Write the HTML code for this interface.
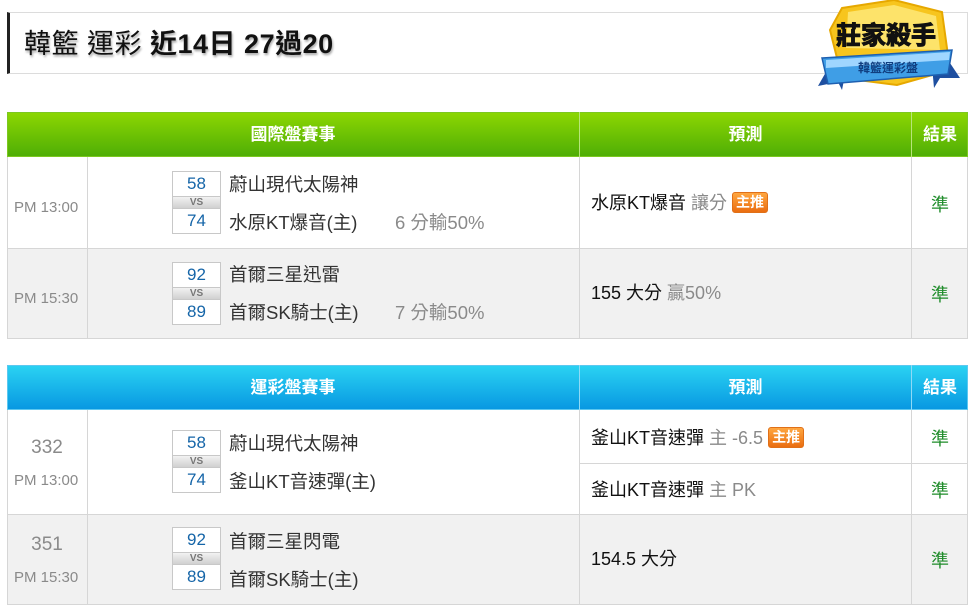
<!DOCTYPE html>
<html><head><meta charset="utf-8"><style>
*{margin:0;padding:0;box-sizing:border-box}
body{width:975px;height:613px;background:#fff;position:relative;overflow:hidden;font-family:"Liberation Sans","Noto Sans CJK TC",sans-serif}
.a{position:absolute}
.t{font-size:18.5px;line-height:20px;white-space:nowrap}
.p{font-size:18px;line-height:20px;white-space:nowrap}
.hd{color:#fff;font-weight:bold;font-size:17px;text-align:center;line-height:45px;position:absolute}
.sb{position:absolute;left:172px;width:49px;height:63px;border:1px solid #c8c8c8;background:#fff}
.sb .n{height:24px;text-align:center;color:#1565a8;font-size:17px;line-height:24px}
.sb .v{height:13px;background:linear-gradient(#f2f2f2,#d0d0d0);border-top:1px solid #c8c8c8;border-bottom:1px solid #c8c8c8;text-align:center;font-size:10px;line-height:11px;font-weight:bold;color:#777}
.g{color:#8a8a8a}
.zt{display:inline-block;background:linear-gradient(#ffa640,#ea6d10);color:#fff;border:1px solid #e07018;border-radius:3px;font-size:14px;line-height:18px;height:21px;padding:0 3px;vertical-align:2px;font-weight:bold}
.z{color:#1f8c2a;font-size:18px;text-align:center}
.tm{font-size:15px}
</style></head><body>
<div class="a" style="left:7px;top:12px;width:961px;height:62px;border:1px solid #dcdcdc;border-left:3px solid #222"></div>
<div class="a" style="left:24px;top:27px;font-size:27px;line-height:34px;color:#111;text-shadow:1px 2px 2px #aaa;white-space:nowrap;letter-spacing:0.5px">韓籃 運彩 <b>近14日 27過20</b></div>
<svg class="a" style="left:812px;top:0" width="150" height="92" viewBox="0 0 150 92">
<polygon points="30,8 82,0 130,12 138,70 85,85 30,78 18,30" fill="#f7c51e" stroke="#e6a800" stroke-width="2"/>
<polygon points="36,12 82,5 124,16 128,50 34,48" fill="#fde36a"/>
<polygon points="14,72 6,86 26,82 30,90 34,70" fill="#1e4fa0"/>
<polygon points="136,60 148,78 128,78 122,88 120,66" fill="#1e4fa0"/>
<polygon points="10,58 140,50 136,74 16,84" fill="#3f9ee6" stroke="#1d5fb0" stroke-width="1.5"/>
<polygon points="14,60 138,52 137,60 14,68" fill="#9fd6ff"/>
<text x="74" y="44" text-anchor="middle" font-size="25" font-weight="bold" fill="#111" font-family="Liberation Sans,Noto Sans CJK TC,sans-serif" stroke="#111" stroke-width="1" paint-order="stroke">莊家殺手</text>
<text x="76" y="72" text-anchor="middle" font-size="12" font-weight="bold" fill="#103e80" font-family="Liberation Sans,Noto Sans CJK TC,sans-serif">韓籃運彩盤</text>
</svg>

<div class="a" style="left:7px;top:112px;width:961px;height:45px;background:linear-gradient(#8cd602,#4fae06);border:1px solid #7cc820"></div>
<div class="a" style="left:579px;top:112px;width:1px;height:45px;background:#b8e57a"></div>
<div class="a" style="left:911px;top:112px;width:1px;height:45px;background:#b8e57a"></div>
<div class="hd" style="left:7px;width:572px;top:112px">國際盤賽事</div>
<div class="hd" style="left:580px;width:331px;top:112px">預測</div>
<div class="hd" style="left:912px;width:56px;top:112px">結果</div>

<div class="a" style="left:7px;top:157px;width:961px;height:91px;background:#fff;border-left:1px solid #d6d6d6"></div>
<div class="a" style="left:7px;top:248px;width:961px;height:91px;background:#f1f1f1;border-left:1px solid #d6d6d6;border-top:1px solid #d6d6d6;border-bottom:1px solid #d6d6d6"></div>
<div class="a" style="left:87px;top:157px;width:1px;height:182px;background:#d6d6d6"></div>
<div class="a" style="left:579px;top:157px;width:1px;height:182px;background:#d6d6d6"></div>
<div class="a" style="left:911px;top:157px;width:1px;height:182px;background:#d6d6d6"></div>
<div class="a" style="left:967px;top:157px;width:1px;height:182px;background:#d6d6d6"></div>

<div class="a g tm" style="left:14px;top:199px">PM 13:00</div>
<div class="sb" style="top:171px"><div class="n">58</div><div class="v">VS</div><div class="n">74</div></div>
<div class="a t" style="left:229px;top:175px;color:#333">蔚山現代太陽神</div>
<div class="a t" style="left:229px;top:213px;color:#333">水原KT爆音(主)</div>
<div class="a t g" style="left:395px;top:213px">6 分輸50%</div>
<div class="a p" style="left:591px;top:192px;color:#111">水原KT爆音 <span class="g">讓分</span> <span class="zt">主推</span></div>
<div class="a z" style="left:912px;width:56px;top:191px">準</div>

<div class="a g tm" style="left:14px;top:290px">PM 15:30</div>
<div class="sb" style="top:262px"><div class="n">92</div><div class="v">VS</div><div class="n">89</div></div>
<div class="a t" style="left:229px;top:265px;color:#333">首爾三星迅雷</div>
<div class="a t" style="left:229px;top:303px;color:#333">首爾SK騎士(主)</div>
<div class="a t g" style="left:395px;top:303px">7 分輸50%</div>
<div class="a p" style="left:591px;top:283px;color:#111">155 大分 <span class="g">贏50%</span></div>
<div class="a z" style="left:912px;width:56px;top:281px">準</div>

<div class="a" style="left:7px;top:365px;width:961px;height:45px;background:linear-gradient(#2ad2f2,#0898e2);border:1px solid #5cc8f0"></div>
<div class="a" style="left:579px;top:365px;width:1px;height:45px;background:#8fdaf6"></div>
<div class="a" style="left:911px;top:365px;width:1px;height:45px;background:#8fdaf6"></div>
<div class="hd" style="left:7px;width:572px;top:365px">運彩盤賽事</div>
<div class="hd" style="left:580px;width:331px;top:365px">預測</div>
<div class="hd" style="left:912px;width:56px;top:365px">結果</div>

<div class="a" style="left:7px;top:410px;width:961px;height:105px;background:#fff;border-left:1px solid #d6d6d6"></div>
<div class="a" style="left:7px;top:514px;width:961px;height:91px;background:#f1f1f1;border-left:1px solid #d6d6d6;border-top:1px solid #d6d6d6;border-bottom:1px solid #d6d6d6"></div>
<div class="a" style="left:580px;top:463px;width:388px;height:1px;background:#d6d6d6"></div>
<div class="a" style="left:87px;top:410px;width:1px;height:195px;background:#d6d6d6"></div>
<div class="a" style="left:579px;top:410px;width:1px;height:195px;background:#d6d6d6"></div>
<div class="a" style="left:911px;top:410px;width:1px;height:195px;background:#d6d6d6"></div>
<div class="a" style="left:967px;top:410px;width:1px;height:195px;background:#d6d6d6"></div>

<div class="a g" style="left:7px;width:80px;text-align:center;top:437px;font-size:19px">332</div>
<div class="a g tm" style="left:14px;top:472px">PM 13:00</div>
<div class="sb" style="top:430px"><div class="n">58</div><div class="v">VS</div><div class="n">74</div></div>
<div class="a t" style="left:229px;top:434px;color:#333">蔚山現代太陽神</div>
<div class="a t" style="left:229px;top:472px;color:#333">釜山KT音速彈(主)</div>
<div class="a p" style="left:591px;top:427px;color:#111">釜山KT音速彈 <span class="g">主 -6.5</span> <span class="zt">主推</span></div>
<div class="a z" style="left:912px;width:56px;top:425px">準</div>
<div class="a p" style="left:591px;top:480px;color:#111">釜山KT音速彈 <span class="g">主 PK</span></div>
<div class="a z" style="left:912px;width:56px;top:477px">準</div>

<div class="a g" style="left:7px;width:80px;text-align:center;top:534px;font-size:19px">351</div>
<div class="a g tm" style="left:14px;top:569px">PM 15:30</div>
<div class="sb" style="top:527px"><div class="n">92</div><div class="v">VS</div><div class="n">89</div></div>
<div class="a t" style="left:229px;top:532px;color:#333">首爾三星閃電</div>
<div class="a t" style="left:229px;top:570px;color:#333">首爾SK騎士(主)</div>
<div class="a p" style="left:591px;top:549px;color:#111">154.5 大分</div>
<div class="a z" style="left:912px;width:56px;top:547px">準</div>
</body></html>
